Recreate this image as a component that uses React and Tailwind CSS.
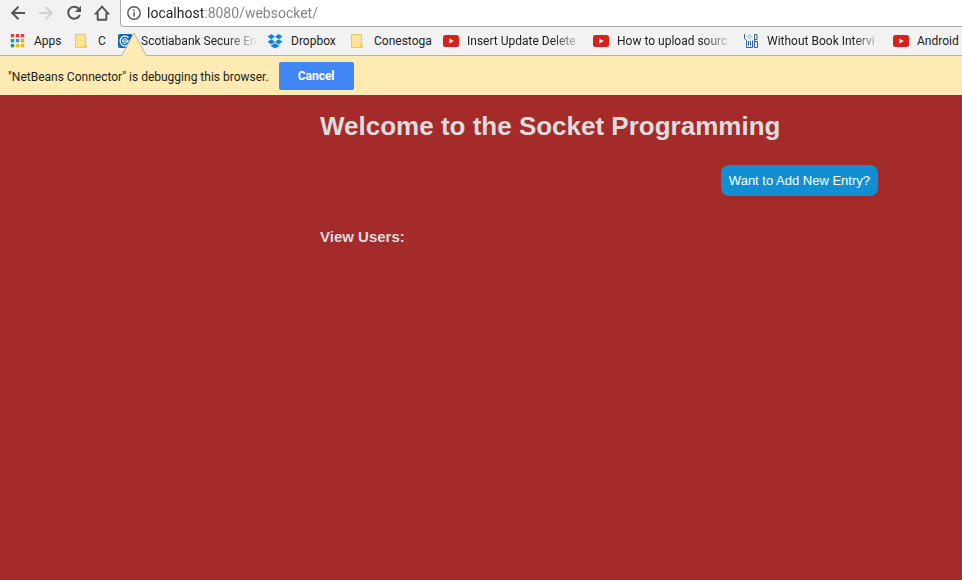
import React from "react";

function BackIcon({ className }) {
  return (
    <svg viewBox="0 0 16 16" className={`h-4 w-4 shrink-0 ${className}`} fill="none" stroke="currentColor" strokeWidth="2">
      <path d="M15 8H2.5M8.5 1.7 2.2 8l6.3 6.3" />
    </svg>
  );
}

function ForwardIcon({ className }) {
  return (
    <svg viewBox="0 0 16 16" className={`h-4 w-4 shrink-0 ${className}`} fill="none" stroke="currentColor" strokeWidth="2">
      <path d="M1 8h12.5M7.5 1.7 13.8 8l-6.3 6.3" />
    </svg>
  );
}

function ReloadIcon() {
  return (
    <svg viewBox="0 0 16 16" className="h-4 w-4 shrink-0">
      <path d="M12.6 3.6A6 6 0 1 0 13.8 9.8" fill="none" stroke="currentColor" strokeWidth="2" />
      <path d="M15 0.8V7H8.8Z" fill="currentColor" />
    </svg>
  );
}

function HomeIcon() {
  return (
    <svg viewBox="0 0 16 16" className="h-4 w-4 shrink-0" fill="none" stroke="currentColor" strokeWidth="1.9">
      <path d="M8 1.6 1.8 8.6H3.7V14.8H12.3V8.6H14.2Z" />
    </svg>
  );
}

function InfoIcon() {
  return (
    <svg viewBox="0 0 14 14" className="h-[14px] w-[14px] shrink-0 text-[#555]" fill="none" stroke="currentColor">
      <circle cx="7" cy="7" r="6.2" strokeWidth="1.4" />
      <path d="M7 6.2v4.3M7 3.4v1.5" strokeWidth="1.5" />
    </svg>
  );
}

const gridColors = ["#db4437", "#db4437", "#db4437", "#1fa463", "#4285f4", "#f4a100", "#1fa463", "#f4b400", "#f4b400"];

function AppsIcon() {
  return (
    <svg viewBox="0 0 16 16" className="h-4 w-4">
      {gridColors.map((color, i) => (
        <rect key={i} x={0.8 + (i % 3) * 5} y={1 + Math.floor(i / 3) * 5} width="3.4" height="3.4" fill={color} />
      ))}
    </svg>
  );
}

function FolderIcon() {
  return (
    <svg viewBox="0 0 16 16" className="h-4 w-4">
      <path d="M1.5 1.5h10v9l1 1v3h-11Z" fill="#ffe391" stroke="#e9c864" />
      <path d="M10.5 14v-3l1-1" fill="none" stroke="#e9c864" />
    </svg>
  );
}

function ScotiaIcon() {
  return (
    <svg viewBox="0 0 16 16" className="h-4 w-4">
      <path d="M3 1h12v12l-2 2H3q-2 0-2-2V3q0-2 2-2Z" fill="#0a6cb5" />
      <path d="M11.5 4.6A4.9 4.9 0 1 0 11.8 11.2" fill="none" stroke="#fff" strokeWidth="1.2" />
      <circle cx="8" cy="8" r="2.4" fill="none" stroke="#fff" />
      <path d="M5.5 8H12" stroke="#fff" />
    </svg>
  );
}

function DropboxIcon() {
  return (
    <svg viewBox="0 0 16 16" className="h-4 w-4" fill="#1081de">
      <path d="M4.5 1 8 3.7 4.2 6.2 0.5 3.4ZM11.5 1 15.5 3.4 11.8 6.2 8 3.7ZM4.2 6.2 8 8.7 4.5 11.4.5 8.8ZM11.8 6.2l3.7 2.6-4 2.6L8 8.7ZM8 10l3.5 2.4.9-.5v1L8 15.6 3.6 12.9v-1l.9.5Z" />
    </svg>
  );
}

function VideoIcon() {
  return (
    <svg viewBox="0 0 16 16" className="h-4 w-4">
      <rect x="0" y="2" width="16" height="12" rx="2.5" fill="#d8201f" />
      <path d="M6.3 5.6v4.8L10.8 8Z" fill="#fff" />
    </svg>
  );
}

function WithoutBookIcon() {
  return (
    <svg viewBox="0 0 16 16" className="h-4 w-4" fill="none" stroke="#2d6399">
      <path d="M1.5 1v4.5l2 2v7h6V7.5M5.5 8v4.5M7.5 8v4.5" />
      <path d="M6.5 1.8 8.4 3.8 6.5 5.8 4.6 3.8Z" strokeWidth="0.8" strokeDasharray="1 1" />
      <path d="M11.5 1.5h2.5v5h-2.5ZM11.5 8.5h3v6h-3ZM11.5 6.5v2" />
    </svg>
  );
}

const bookmarks = [
  { label: "Apps", Icon: AppsIcon, width: "w-[64px]" },
  { label: "C", Icon: FolderIcon, width: "w-[43px]" },
  { label: "Scotiabank Secure En", Icon: ScotiaIcon, width: "w-[150px]", fade: true },
  { label: "Dropbox", Icon: DropboxIcon, width: "w-[83px]" },
  { label: "Conestoga", Icon: FolderIcon, width: "w-[93px]" },
  { label: "Insert Update Delete", Icon: VideoIcon, width: "w-[150px]", fade: true },
  { label: "How to upload sourc", Icon: VideoIcon, width: "w-[150px]", fade: true },
  { label: "Without Book Intervi", Icon: WithoutBookIcon, width: "w-[150px]", fade: true },
  { label: "Android", Icon: VideoIcon, width: "w-[150px]" },
];

function Toolbar() {
  return (
    <div className="flex h-[27px] pl-[10px] text-[#555]">
      <div className="flex h-[26px] shrink-0 items-center gap-3 pr-[10px]">
        <button aria-label="Back"><BackIcon className="text-[#555]" /></button>
        <button aria-label="Forward" disabled><ForwardIcon className="text-[#d2d2d2]" /></button>
        <button aria-label="Reload"><ReloadIcon /></button>
        <button aria-label="Home"><HomeIcon /></button>
      </div>
      <div className="flex min-w-0 grow items-center gap-[6px] rounded-bl border-b border-l border-[#a9a9a9] bg-white pl-[6px]">
        <InfoIcon />
        <input
          type="text"
          aria-label="Address"
          defaultValue="localhost:8080/websocket/"
          className="min-w-0 grow bg-[linear-gradient(to_right,#1f1f1f_56px,#808080_56px)] bg-clip-text text-[14px] leading-5 text-transparent outline-none"
        />
      </div>
    </div>
  );
}

function BookmarksBar() {
  return (
    <nav aria-label="Bookmarks" className="flex h-7 items-center overflow-hidden pl-[10px]">
      {bookmarks.map(({ label, Icon, width, fade }) => (
        <a key={label} href="#" className={`flex shrink-0 items-center gap-2 ${width}`}>
          <span className="shrink-0"><Icon /></span>
          <span
            className={`whitespace-nowrap ${
              fade ? "[mask-image:linear-gradient(to_right,#000_85px,transparent_118px)]" : ""
            }`}
          >
            {label}
          </span>
        </a>
      ))}
    </nav>
  );
}

function DebugBar() {
  return (
    <div className="relative flex h-10 items-center gap-[10px] border-t border-[#b4b1aa] bg-[#feeab3] pl-2">
      <svg viewBox="0 0 26 25" className="absolute -top-[24px] left-[121px] h-[25px] w-[26px]">
        <path d="M0.5 24.5 13 1 25.5 24.5V25H.5Z" fill="#feeab3" />
        <path d="M0.5 24 13 1 25.5 24" fill="none" stroke="#b8b3a5" />
      </svg>
      <p className="whitespace-nowrap pt-0.5">"NetBeans Connector" is debugging this browser.</p>
      <button className="h-7 w-[75px] shrink-0 rounded-xs bg-[#4285f4] font-bold text-white">Cancel</button>
    </div>
  );
}

export default function App() {
  return (
    <div className="flex min-h-screen flex-col bg-[#a52a2a]">
      <header className="bg-[#f2f2f2] font-[Roboto,'Open_Sans',sans-serif] text-[12px] leading-4 text-[#222]">
        <Toolbar />
        <BookmarksBar />
        <DebugBar />
      </header>
      <main className="ml-[320px] flex max-w-[558px] flex-col pt-[15px] font-['Liberation_Sans',Arial,sans-serif] text-[#dddddd]">
        <h1 className="text-[26px] font-bold leading-8">Welcome to the Socket Programming</h1>
        <button className="mt-[23px] h-[31px] self-end rounded-lg bg-[#118fd2] px-2 text-[13px] text-white">
          Want to Add New Entry?
        </button>
        <h2 className="mt-[31px] text-[15px] font-bold leading-5">View Users:</h2>
      </main>
    </div>
  );
}
